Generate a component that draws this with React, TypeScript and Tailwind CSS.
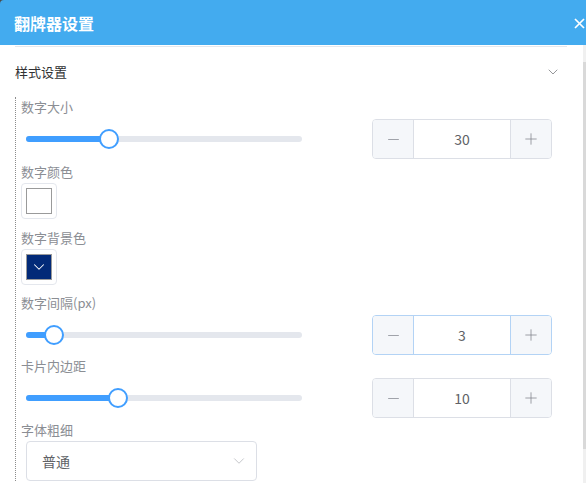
import { ChevronDown, Minus, Plus } from "lucide-react";

const font = "font-['Noto_Sans_CJK_SC','Noto_Sans',sans-serif]";

function Label({ text, className = "" }: { text: string; className?: string }) {
  return (
    <div className={`h-[20px] text-[13px] leading-[20px] text-[#8b8e94] ${className}`}>
      {text}
    </div>
  );
}

function Slider({ percent }: { percent: number }) {
  return (
    <div className="relative ml-[5px] w-[276px] h-[6px] rounded-full bg-[#e4e7ed]">
      <div
        className="absolute left-0 top-0 h-[6px] rounded-full bg-[#409eff]"
        style={{ width: `${percent}%` }}
      />
      <div
        className="absolute top-1/2 w-[20px] h-[20px] -translate-x-1/2 -translate-y-1/2 rounded-full border-2 border-[#409eff] bg-white"
        style={{ left: `${percent}%` }}
      />
    </div>
  );
}

function NumberInput({ value, active }: { value: number; active?: boolean }) {
  const border = active ? "border-[#b3d3f5]" : "border-[#dcdfe6]";
  return (
    <div
      className={`mt-[2px] flex w-[180px] h-[40px] overflow-hidden rounded-[4px] border ${border}`}
    >
      <div className={`flex w-[41px] items-center justify-center border-r ${border} bg-[#f5f7fa]`}>
        <Minus size={17} strokeWidth={1} color="#7d8088" />
      </div>
      <div className="flex flex-1 items-center justify-center text-[14px] text-[#606266]">
        {value}
      </div>
      <div className={`flex w-[41px] items-center justify-center border-l ${border} bg-[#f5f7fa]`}>
        <Plus size={18} strokeWidth={1} color="#7d8088" />
      </div>
    </div>
  );
}

function SliderRow({
  label,
  percent,
  value,
  active,
}: {
  label: string;
  percent: number;
  value: number;
  active?: boolean;
}) {
  return (
    <div>
      <Label text={label} />
      <div className="flex items-start h-[43px]">
        <div className="flex h-[43px] w-[351px] items-center">
          <Slider percent={percent} />
        </div>
        <NumberInput value={value} active={active} />
      </div>
    </div>
  );
}

function ColorBox({ color }: { color?: string }) {
  return (
    <div className="w-[36px] h-[36px] rounded-[4px] border border-[#e4e7ed] p-[4px]">
      {color ? (
        <div
          className="flex h-full w-full items-center justify-center border border-[#9a9a9a] bg-[#022a78]"
        >
          <ChevronDown size={18} strokeWidth={1.4} color="#ffffff" />
        </div>
      ) : (
        <div className="h-full w-full border border-[#9a9a9a] bg-white" />
      )}
    </div>
  );
}

export default function App() {
  return (
    <div className={`w-[586px] h-[483px] overflow-hidden bg-[#4a4a4a] ${font}`}>
      <div className="flex h-[45px] items-center justify-between rounded-tl-[4px] bg-[#43abef] pl-[14px] pr-[1px]">
        <span className="text-[16px] font-bold text-white">翻牌器设置</span>
        <svg width="11" height="11" viewBox="0 0 11 11" className="mt-[1px]">
          <path d="M1 1 L10 10 M10 1 L1 10" stroke="#ffffff" strokeWidth="1.7" />
        </svg>
      </div>
      <div className="flex h-[438px] bg-white">
        <div className="flex-1 pl-[15px] pt-[1px]">
          <div className="mr-[16px] border-t border-[#e4e7ed]" />
          <div className="flex h-[50px] items-center justify-between pr-[22px]">
            <span className="text-[13px] text-[#303133]">样式设置</span>
            <ChevronDown size={16} strokeWidth={1} color="#606266" />
          </div>
          <div className="border-l border-dotted border-[#8c8c8c] pl-[5px]">
            <SliderRow label="数字大小" percent={30} value={30} />
            <Label text="数字颜色" className="mt-[2px]" />
            <div className="mt-[1px]">
              <ColorBox />
            </div>
            <Label text="数字背景色" className="mt-[9px]" />
            <div className="mt-[1px]">
              <ColorBox color="#022a78" />
            </div>
            <div className="mt-[8px]">
              <SliderRow label="数字间隔(px)" percent={10} value={3} active />
            </div>
            <SliderRow label="卡片内边距" percent={33.3} value={10} />
            <Label text="字体粗细" className="mt-[1px]" />
            <div className="mt-[1px] ml-[5px] flex w-[231px] h-[40px] items-center justify-between rounded-[4px] border border-[#dcdfe6] pl-[15px] pr-[8px]">
              <span className="text-[14px] text-[#606266]">普通</span>
              <ChevronDown size={18} strokeWidth={1} color="#b0b3b8" />
            </div>
          </div>
        </div>
        <div className="flex w-[3px] flex-col bg-[#f0f0f0]">
          <div className="mt-[17px] h-[387px] bg-[#d9d9d9]" />
        </div>
      </div>
    </div>
  );
}
